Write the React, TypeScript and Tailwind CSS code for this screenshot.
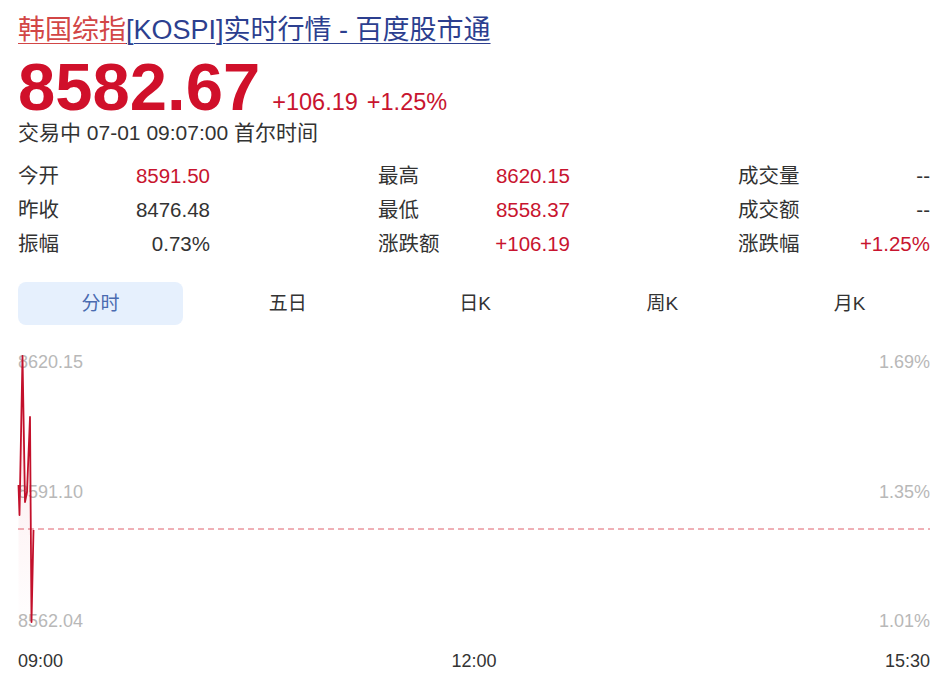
import React from "react"

const stats = [
  [
    { label: "今开", value: "8591.50", up: true },
    { label: "昨收", value: "8476.48", up: false },
    { label: "振幅", value: "0.73%", up: false },
  ],
  [
    { label: "最高", value: "8620.15", up: true },
    { label: "最低", value: "8558.37", up: true },
    { label: "涨跌额", value: "+106.19", up: true },
  ],
  [
    { label: "成交量", value: "--", up: false },
    { label: "成交额", value: "--", up: false },
    { label: "涨跌幅", value: "+1.25%", up: true },
  ],
]

const tabs = ["分时", "五日", "日K", "周K", "月K"]

// intraday points, x/y in px inside the chart box
const points: [number, number][] = [
  [18.5, 133],
  [19.5, 163],
  [22.5, 4],
  [25, 150],
  [27, 140],
  [30, 65],
  [31.5, 270],
  [33.5, 178],
]

const PriceChart = () => {
  const line = points.map(([x, y], i) => `${i ? "L" : "M"}${x},${y}`).join(" ")
  const area = `${line} L33.5,279 L18.5,279 Z`
  return (
    <svg className="absolute left-0 top-0 w-full h-full" width="951" height="279">
      <defs>
        <linearGradient id="fill" x1="0" y1="0" x2="0" y2="1">
          <stop offset="0%" stopColor="#e0253f" stopOpacity="0.12" />
          <stop offset="100%" stopColor="#e0253f" stopOpacity="0" />
        </linearGradient>
      </defs>
      <line
        x1="18"
        y1="177"
        x2="930"
        y2="177"
        stroke="#e0606c"
        strokeWidth="1"
        strokeDasharray="6 4"
      />
      <path d={area} fill="url(#fill)" />
      <path d={line} fill="none" stroke="#c3102b" strokeWidth="1.8" strokeLinejoin="round" />
    </svg>
  )
}

export default function App() {
  return (
    <div className="w-[951px] h-[684px] bg-white overflow-hidden font-['Liberation_Sans','Noto_Sans_CJK_SC',sans-serif] text-[#333]">
      <div className="pl-[18px] pt-[14px]">
        <h1 className="text-[27px] leading-[32px] whitespace-nowrap">
          <a className="text-[#d24646] underline decoration-1 underline-offset-[4px]">韩国综指</a>
          <a className="text-[#2c3f8f] underline decoration-1 underline-offset-[4px]">
            [KOSPI]实时行情 - 百度股市通
          </a>
        </h1>

        <div className="mt-[8px] flex items-baseline text-[#d0102a]">
          <span className="text-[67px] leading-[66px] font-bold">8582.67</span>
          <span className="ml-[12px] text-[23.5px] text-[#c8142f]">+106.19</span>
          <span className="ml-[9px] text-[23.5px] text-[#c8142f]">+1.25%</span>
        </div>

        <div className="text-[21px] leading-[26px]">交易中 07-01 09:07:00 首尔时间</div>
      </div>

      <div className="mt-[13px] pl-[18px] pr-[21px] flex justify-between text-[20.5px]">
        {stats.map((col, ci) => (
          <div key={ci} className="w-[192px] flex flex-col">
            {col.map((s) => (
              <div key={s.label} className="h-[34px] flex items-center justify-between">
                <span>{s.label}</span>
                <span className={s.up ? "text-[#c8142f]" : "text-[#333]"}>{s.value}</span>
              </div>
            ))}
          </div>
        ))}
      </div>

      <div className="mt-[21px] pl-[18px] pr-[19px] flex justify-between">
        {tabs.map((t, i) => (
          <div
            key={t}
            className={
              i === 0
                ? "w-[165px] h-[43px] rounded-lg bg-[#e6f0fd] text-[#4a6bb0] flex items-center justify-center text-[19px]"
                : "w-[165px] h-[43px] rounded-lg text-[#333] flex items-center justify-center text-[19px]"
            }
          >
            {t}
          </div>
        ))}
      </div>

      <div className="relative mt-[27px] h-[279px]">
        <div className="h-full pl-[18px] pr-[21px] flex justify-between text-[18px] leading-[20px] text-[#b8b8b8]">
          <div className="flex flex-col justify-between">
            <span>8620.15</span>
            <span>8591.10</span>
            <span>8562.04</span>
          </div>
          <div className="flex flex-col justify-between items-end">
            <span>1.69%</span>
            <span>1.35%</span>
            <span>1.01%</span>
          </div>
        </div>
        <PriceChart />
      </div>

      <div className="mt-[20px] pl-[18px] pr-[21px] flex justify-between text-[18px] leading-[20px]">
        <span>09:00</span>
        <span>12:00</span>
        <span>15:30</span>
      </div>
    </div>
  )
}
